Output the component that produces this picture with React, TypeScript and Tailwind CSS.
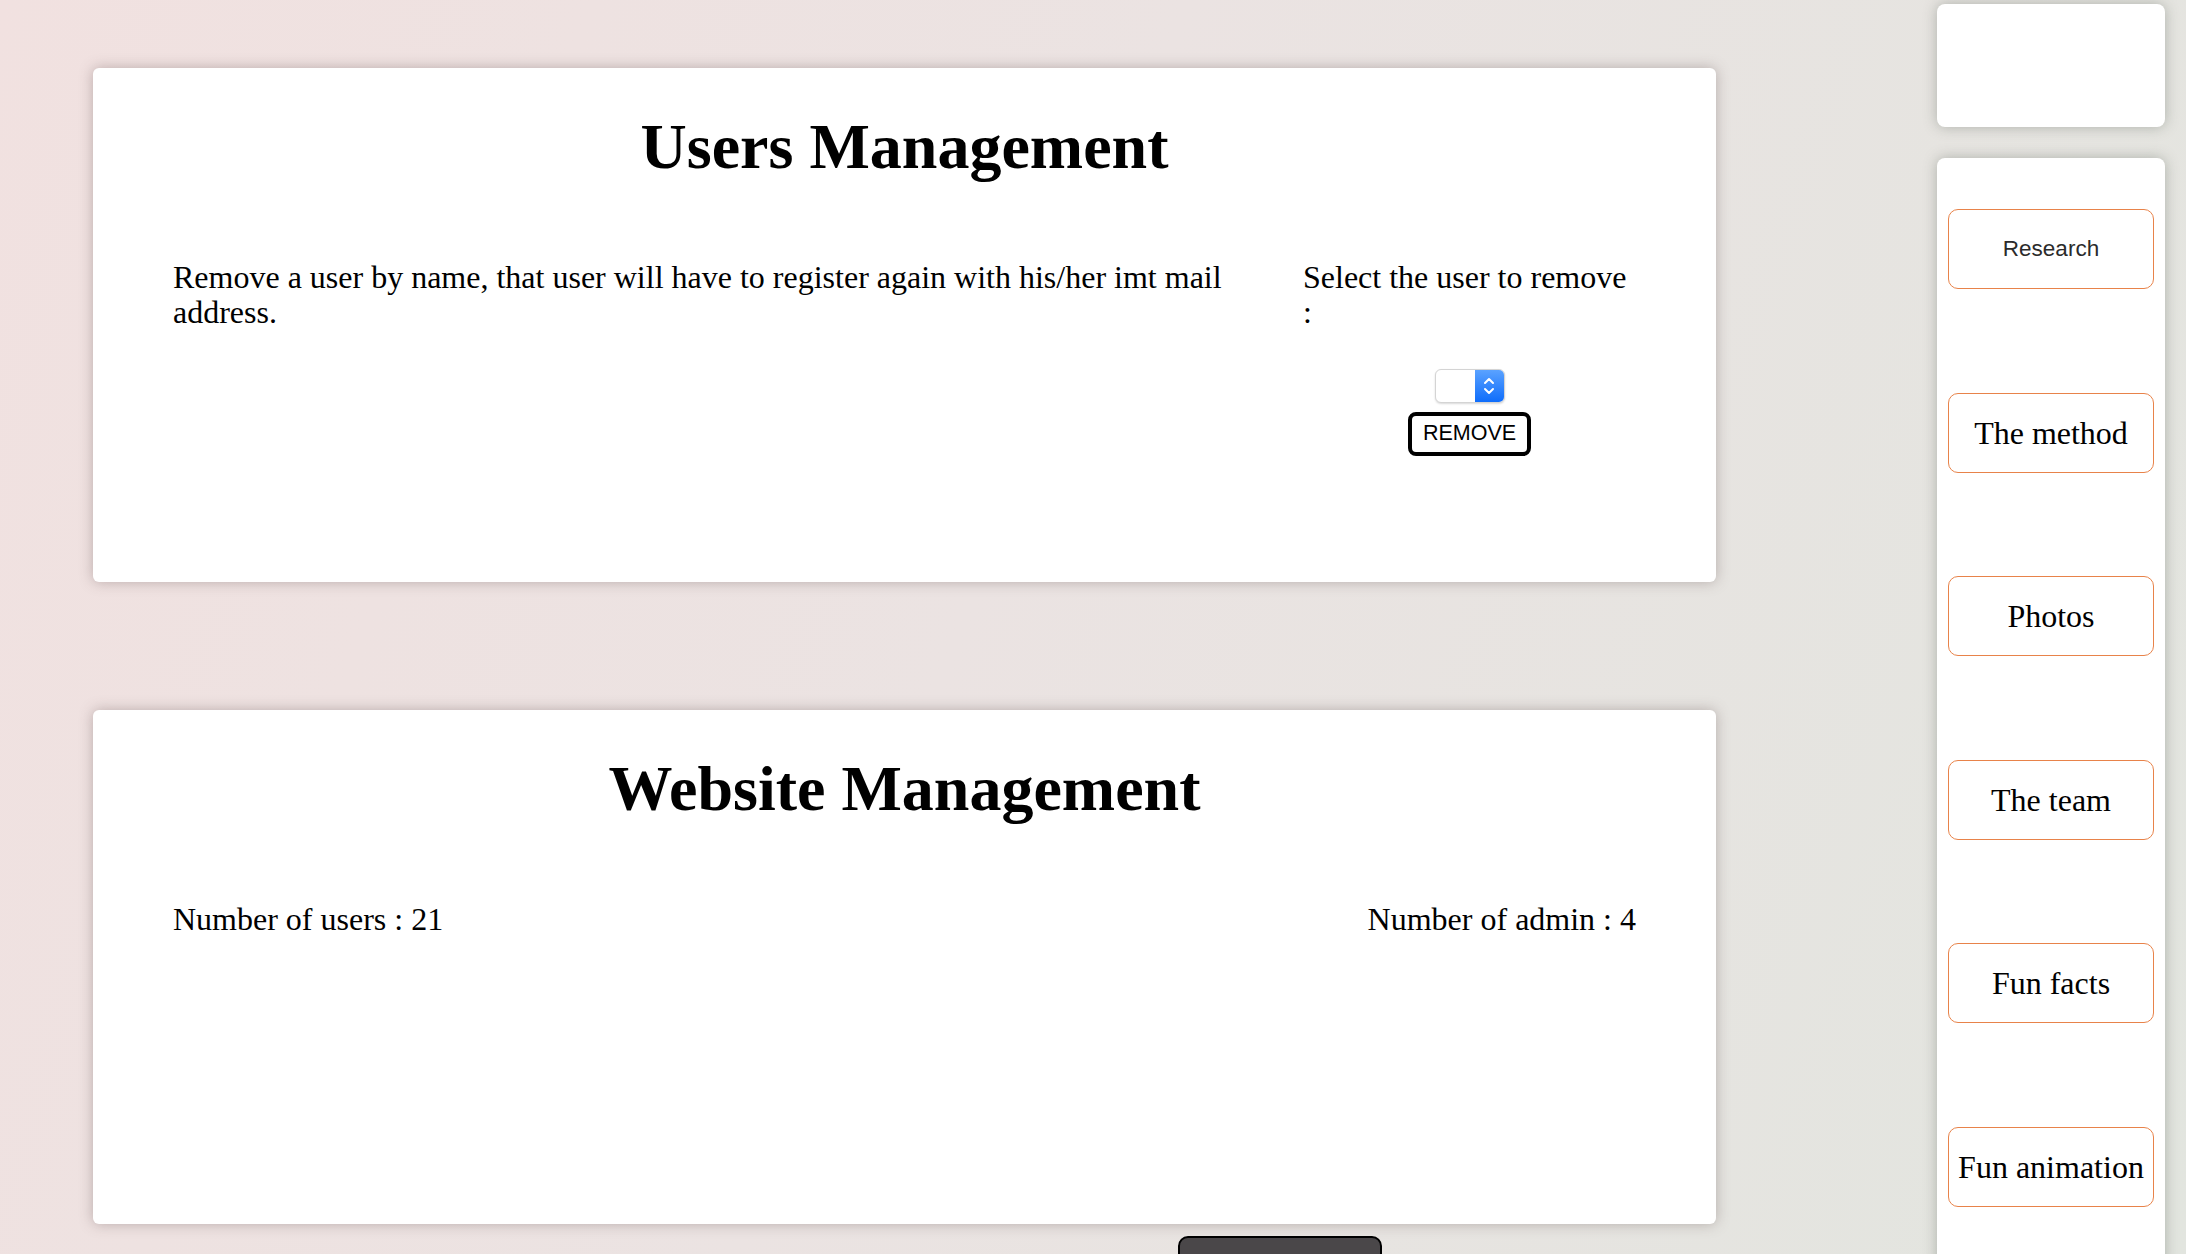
const serif = "font-['Liberation_Serif','Times_New_Roman',serif]";
const sans = "font-['Liberation_Sans',Arial,sans-serif]";

const navItems = ["The method", "Photos", "The team", "Fun facts", "Fun animation"];

function FakeSelect() {
  return (
    <div className="flex h-[34px] w-[70px] overflow-hidden rounded-[6px] border border-[#d4d4d4] bg-white shadow-[0_1px_2px_rgba(0,0,0,0.15)]">
      <div className="flex-1" />
      <div className="flex w-[29px] items-center justify-center bg-[linear-gradient(#5aa2ff,#0f6dfb)]">
        <svg width="14" height="22" viewBox="0 0 14 22" fill="none" stroke="white" strokeWidth="2" strokeLinecap="round" strokeLinejoin="round">
          <path d="M3 8 L7 4 L11 8" />
          <path d="M3 14 L7 18 L11 14" />
        </svg>
      </div>
    </div>
  );
}

function Card({ title, children }: { title: string; children: React.ReactNode }) {
  return (
    <section className="h-[514px] w-[1623px] shrink-0 rounded-md bg-white px-[80px] pt-[42px] shadow-[0_0_14px_rgba(90,70,70,0.35)]">
      <h1 className={`${serif} text-center text-[64px] font-bold leading-[74px] text-black`}>{title}</h1>
      {children}
    </section>
  );
}

export default function App() {
  return (
    <div className="relative flex h-screen w-full overflow-hidden bg-[linear-gradient(110deg,#f1e1e0_0%,#ebe3e2_45%,#e2e5df_100%)]">
      <main className="flex flex-col gap-[128px] pl-[93px] pt-[68px]">
        <Card title="Users Management">
          <div className={`${serif} mt-[76px] grid grid-cols-[1090px_333px] gap-[40px] text-[32px] leading-[35px] text-black`}>
            <p>Remove a user by name, that user will have to register again with his/her imt mail address.</p>
            <div className="flex flex-col items-center">
              <p className="self-stretch">Select the user to remove :</p>
              <div className="mt-[39px]">
                <FakeSelect />
              </div>
              <button className={`${sans} mt-[9px] h-[44px] w-[123px] rounded-[8px] border-[4px] border-black bg-white text-[21.5px] leading-none text-black`}>
                REMOVE
              </button>
            </div>
          </div>
        </Card>
        <Card title="Website Management">
          <div className={`${serif} mt-[76px] flex justify-between text-[32px] leading-[35px] text-black`}>
            <p>Number of users : 21</p>
            <p>Number of admin : 4</p>
          </div>
        </Card>
      </main>

      <aside className="ml-auto mr-[21px] mt-[4px] flex w-[228px] shrink-0 flex-col gap-[31px]">
        <div className="h-[123px] shrink-0 rounded-lg bg-white shadow-[0_0_14px_rgba(70,80,70,0.35)]" />
        <nav className="flex h-[1200px] shrink-0 flex-col gap-[103.5px] rounded-lg bg-white px-[11px] pt-[51px] shadow-[0_0_14px_rgba(70,80,70,0.35)]">
          <a className={`${sans} flex h-[80px] shrink-0 items-center justify-center rounded-[10px] border border-[#e8834a] text-[22.5px] text-[#2b2b2b]`}>
            Research
          </a>
          {navItems.map((item) => (
            <a
              key={item}
              className={`${serif} flex h-[80px] shrink-0 items-center justify-center rounded-[10px] border border-[#e8834a] text-[32px] text-black`}
            >
              {item}
            </a>
          ))}
        </nav>
      </aside>

      <button className={`${sans} absolute left-[1178px] top-[1236px] h-[60px] w-[204px] rounded-t-[10px] border-2 border-black bg-[#4a4749] pt-[10px] text-[24px] text-white`}>
        Disconnect
      </button>
    </div>
  );
}
